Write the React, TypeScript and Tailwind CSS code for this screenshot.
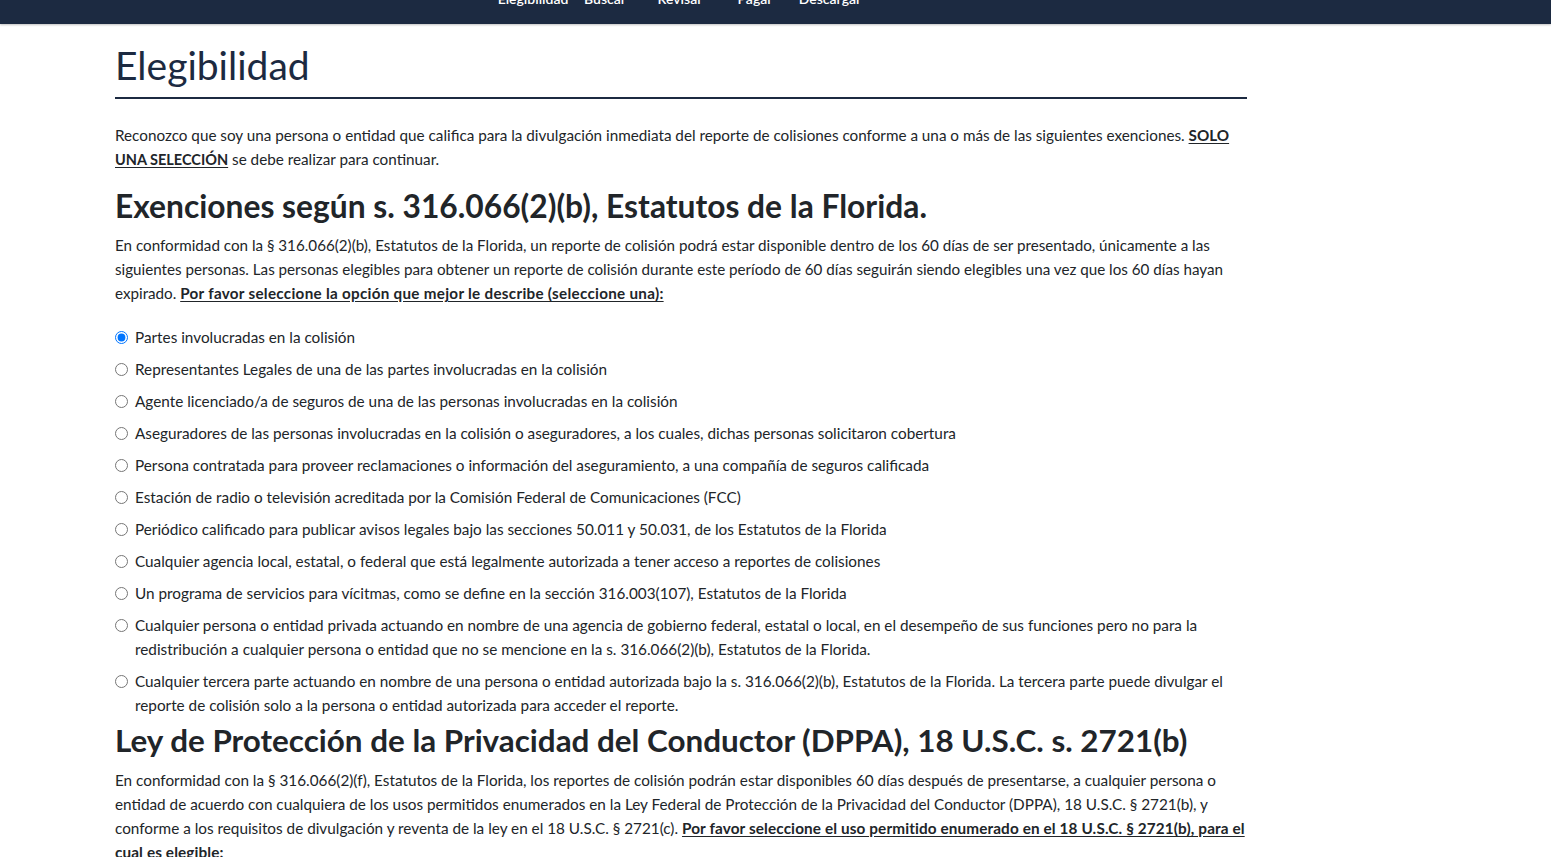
import React from "react";

const items: string[][] = [
  ["Partes involucradas en la colisión"],
  ["Representantes Legales de una de las partes involucradas en la colisión"],
  ["Agente licenciado/a de seguros de una de las personas involucradas en la colisión"],
  ["Aseguradores de las personas involucradas en la colisión o aseguradores, a los cuales, dichas personas solicitaron cobertura"],
  ["Persona contratada para proveer reclamaciones o información del aseguramiento, a una compañía de seguros calificada"],
  ["Estación de radio o televisión acreditada por la Comisión Federal de Comunicaciones (FCC)"],
  ["Periódico calificado para publicar avisos legales bajo las secciones 50.011 y 50.031, de los Estatutos de la Florida"],
  ["Cualquier agencia local, estatal, o federal que está legalmente autorizada a tener acceso a reportes de colisiones"],
  ["Un programa de servicios para vícitmas, como se define en la sección 316.003(107), Estatutos de la Florida"],
  [
    "Cualquier persona o entidad privada actuando en nombre de una agencia de gobierno federal, estatal o local, en el desempeño de sus funciones pero no para la",
    "redistribución a cualquier persona o entidad que no se mencione en la s. 316.066(2)(b), Estatutos de la Florida.",
  ],
  [
    "Cualquier tercera parte actuando en nombre de una persona o entidad autorizada bajo la s. 316.066(2)(b), Estatutos de la Florida. La tercera parte puede divulgar el",
    "reporte de colisión solo a la persona o entidad autorizada para acceder el reporte.",
  ],
];

export default function App() {
  return (
    <div className="min-h-screen bg-white text-[#212529]" style={{ fontFamily: "Lato, 'Noto Sans', sans-serif" }}>
      <div className="h-[24px] bg-[#1c2a41] overflow-hidden shadow-[0_1px_2px_rgba(0,0,0,0.25)] relative z-10">
        <div className="flex text-white text-[14px] font-semibold leading-[16px] -mt-[9px] pl-[497px] whitespace-nowrap">
          <span className="w-[72px] text-center">Elegibilidad</span>
          <span className="w-[72px] text-center">Buscar</span>
          <span className="w-[78px] text-center">Revisar</span>
          <span className="w-[72px] text-center">Pagar</span>
          <span className="w-[78px] text-center">Descargar</span>
        </div>
      </div>
      <div className="ml-[115px] w-[1132px] pt-[17px]">
        <h1 className="text-[39px] leading-[48px] font-normal text-[#1c2a41] pb-[8px] border-b-2 border-[#1c2a41]">
          Elegibilidad
        </h1>
        <p className="mt-[24px] text-[15.25px] leading-[24px] mb-[16px] whitespace-nowrap">
          Reconozco que soy una persona o entidad que califica para la divulgación inmediata del reporte de colisiones conforme a una o más de las siguientes exenciones.{" "}
          <span className="font-bold underline underline-offset-2">SOLO</span>
          <br />
          <span className="font-bold underline underline-offset-2 text-[14.5px] leading-[18px]">UNA SELECCIÓN</span> se debe realizar para continuar.
        </p>
        <h2 className="text-[31.75px] leading-[38px] font-bold mb-[8px]">
          Exenciones según s. 316.066(2)(b), Estatutos de la Florida.
        </h2>
        <p className="text-[15.2px] leading-[24px] mb-[16px] whitespace-nowrap">
          En conformidad con la § 316.066(2)(b), Estatutos de la Florida, un reporte de colisión podrá estar disponible dentro de los 60 días de ser presentado, únicamente a las
          <br />
          siguientes personas. Las personas elegibles para obtener un reporte de colisión durante este período de 60 días seguirán siendo elegibles una vez que los 60 días hayan
          <br />
          expirado.{" "}
          <span className="font-bold underline underline-offset-2 tracking-[0.3px]">
            Por favor seleccione la opción que mejor le describe (seleccione una):
          </span>
        </p>
        <div className="flex flex-col">
          {items.map((lines, i) => (
            <label key={i} className="flex items-start py-[4px] text-[15.3px] leading-[24px] whitespace-nowrap">
              <span className="h-[24px] flex items-center">
                <input type="radio" name="ex" defaultChecked={i === 0} className="w-[13px] h-[13px] m-0" />
              </span>
              <span className="ml-[7px]">
                {lines.map((l, j) => (
                  <React.Fragment key={j}>
                    {j > 0 && <br />}
                    {l}
                  </React.Fragment>
                ))}
              </span>
            </label>
          ))}
        </div>
        <h2 className="text-[31.4px] leading-[38px] font-bold mb-[8px]">
          Ley de Protección de la Privacidad del Conductor (DPPA), 18 U.S.C. s. 2721(b)
        </h2>
        <p className="text-[15.3px] leading-[24px] pt-[1px] whitespace-nowrap">
          En conformidad con la § 316.066(2)(f), Estatutos de la Florida, los reportes de colisión podrán estar disponibles 60 días después de presentarse, a cualquier persona o
          <br />
          entidad de acuerdo con cualquiera de los usos permitidos enumerados en la Ley Federal de Protección de la Privacidad del Conductor (DPPA), 18 U.S.C. § 2721(b), y
          <br />
          conforme a los requisitos de divulgación y reventa de la ley en el 18 U.S.C. § 2721(c).{" "}
          <span className="font-bold underline underline-offset-2 tracking-[0.12px]">
            Por favor seleccione el uso permitido enumerado en el 18 U.S.C. § 2721(b), para el
            <br />
            cual es elegible:
          </span>
        </p>
      </div>
    </div>
  );
}
